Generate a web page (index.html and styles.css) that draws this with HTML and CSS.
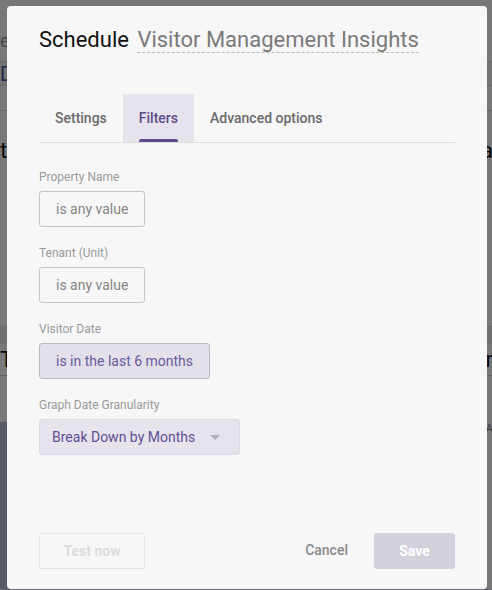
FILE: index.html
```html
<!DOCTYPE html>
<html lang="en">
<head>
<meta charset="utf-8">
<title>Schedule</title>
<link rel="stylesheet" href="styles.css">
</head>
<body>
<div class="page">
  <div class="pg-top"><span class="pg-frag">e</span></div>
  <div class="pg-row pg-band"><span class="pg-frag pg-link">Do</span></div>
  <div class="pg-row"></div>
  <div class="pg-block"><span class="pg-frag pg-dark">to</span><span class="pg-frag pg-dark pg-end">ta</span></div>
  <div class="pg-gap"></div>
  <div class="pg-row2"></div>
  <div class="pg-block2"><span class="pg-frag pg-dark">Te</span><span class="pg-frag pg-dark pg-end">or</span></div>
  <div class="pg-chart"><span class="pg-axis">OA</span></div>
</div>
<div class="overlay"></div>
<div class="modal">
  <h1 class="title"><span class="title-main">Schedule</span> <span class="title-name">Visitor Management Insights</span></h1>
  <div class="tabs">
    <div class="tab">Settings</div>
    <div class="tab tab-active">Filters</div>
    <div class="tab">Advanced options</div>
  </div>
  <div class="fields">
    <div class="field">
      <div class="label">Property Name</div>
      <div class="pill">is any value</div>
    </div>
    <div class="field">
      <div class="label">Tenant (Unit)</div>
      <div class="pill">is any value</div>
    </div>
    <div class="field">
      <div class="label">Visitor Date</div>
      <div class="pill pill-set">is in the last 6 months</div>
    </div>
    <div class="field">
      <div class="label">Graph Date Granularity</div>
      <div class="select"><span>Break Down by Months</span><span class="caret"></span></div>
    </div>
  </div>
  <div class="footer">
    <button class="btn btn-test">Test now</button>
    <div class="footer-right">
      <button class="btn btn-cancel">Cancel</button>
      <button class="btn btn-save">Save</button>
    </div>
  </div>
</div>
</body>
</html>
```
FILE: styles.css
```css
* { box-sizing: border-box; }
html, body { margin: 0; padding: 0; }
body {
  width: 492px;
  height: 590px;
  overflow: hidden;
  font-family: Roboto, "Liberation Sans", Arial, sans-serif;
  background: #ffffff;
  position: relative;
}

/* underlying page (dimmed) */
.page {
  display: flex;
  flex-direction: column;
  height: 590px;
}
.pg-top {
  height: 62px;
  display: flex;
  align-items: flex-end;
  padding: 0 0 10px 0;
  border-bottom: 1px solid #d8d8d8;
}
.pg-frag { font-size: 18px; color: #999; white-space: nowrap; }
.pg-row {
  height: 25px;
  border-bottom: 1px solid #d8d8d8;
}
.pg-band {
  height: 24px;
  background: #f6f6f8;
  display: flex;
  align-items: center;
}
.pg-link { color: #4b5aa0; font-size: 20px; }
.pg-block {
  height: 60px;
  display: flex;
  justify-content: space-between;
  align-items: center;
  padding-top: 18px;
}
.pg-dark { color: #111; font-size: 22px; }
.pg-end { letter-spacing: -1px; }
.pg-gap { height: 155px; }
.pg-row2 { height: 18px; background: #efefef; border-top: 1px solid #e0e0e0; }
.pg-block2 {
  height: 32px;
  display: flex;
  justify-content: space-between;
  align-items: center;
  border-bottom: 1px solid #d0d0d0;
}
.pg-chart {
  flex: 1;
  margin-top: 46px;
  display: flex;
  justify-content: space-between;
  align-items: flex-start;
  border-bottom: 1px solid #dde;
  background: linear-gradient(to right, #bcc4dc 0px, #bcc4dc 20px, #ffffff 470px);
}
.pg-axis {
  font-size: 11px;
  color: #777;
  margin-left: auto;
  letter-spacing: -1px;
}

.overlay {
  position: absolute;
  inset: 0;
  background: rgba(0, 0, 0, 0.53);
}

/* modal */
.modal {
  position: absolute;
  top: 6px;
  left: 7px;
  width: 480px;
  height: 583px;
  background: #f7f7f7;
  border-radius: 4px;
  padding: 20px 32px 20px;
  display: flex;
  flex-direction: column;
}
.title {
  margin: 0;
  font-size: 22px;
  line-height: 28px;
  font-weight: 400;
  white-space: nowrap;
}
.title-main { color: #111; }
.title-name {
  color: #7a7a7a;
  border-bottom: 1px dashed #b8b8b8;
  margin-left: 3px;
}

.tabs {
  margin-top: 40px;
  display: flex;
  border-bottom: 1px solid #dddddd;
}
.tab {
  position: relative;
  height: 48px;
  line-height: 48px;
  padding: 0 16px;
  font-size: 14px;
  font-weight: 500;
  color: #6a6a6a;
}
.tab-active {
  background: #e6e3ec;
  color: #5f4b8b;
}
.tab-active::after {
  content: "";
  position: absolute;
  left: 16px;
  right: 16px;
  bottom: 0;
  height: 3px;
  background: #5f4b8b;
  border-radius: 2px 2px 0 0;
}

.fields {
  display: flex;
  flex-direction: column;
  gap: 18px;
  padding-top: 26px;
  align-items: flex-start;
}
.field {
  display: flex;
  flex-direction: column;
  gap: 6px;
  align-items: flex-start;
}
.label {
  font-size: 12px;
  line-height: 16px;
  color: #9a9a9a;
}
.pill {
  height: 36px;
  line-height: 34px;
  padding: 0 16px;
  border: 1px solid #c6c6c6;
  border-radius: 3px;
  font-size: 14px;
  color: #858585;
  white-space: nowrap;
}
.pill-set {
  background: #e3e0ea;
  border-color: #bcb9c4;
  color: #6a5a9c;
}
.select {
  height: 36px;
  width: 201px;
  padding: 0 19px 0 12px;
  border: 1px solid #dcd9e2;
  border-radius: 3px;
  background: #e6e3ec;
  font-size: 14px;
  color: #5f4e94;
  display: flex;
  align-items: center;
  justify-content: space-between;
  white-space: nowrap;
}
.caret {
  width: 0;
  height: 0;
  border-left: 5px solid transparent;
  border-right: 5px solid transparent;
  border-top: 5px solid #b0aeb6;
}

.footer {
  margin-top: auto;
  display: flex;
  justify-content: space-between;
  align-items: center;
}
.footer-right {
  display: flex;
  align-items: center;
  gap: 25px;
}
.btn {
  font-family: Roboto, "Liberation Sans", Arial, sans-serif;
  font-size: 14px;
  font-weight: 700;
  height: 36px;
  line-height: 34px;
  border-radius: 3px;
  border: 1px solid transparent;
  background: transparent;
  padding: 0;
  cursor: default;
}
.btn-test {
  width: 106px;
  border-color: #e4e4e4;
  color: #dcdcdc;
}
.btn-cancel {
  color: #8a8a8a;
  font-weight: 500;
  padding: 0;
  margin-top: -2px;
}
.btn-save {
  width: 81px;
  background: #d3d1dc;
  color: #ffffff;
}
```
